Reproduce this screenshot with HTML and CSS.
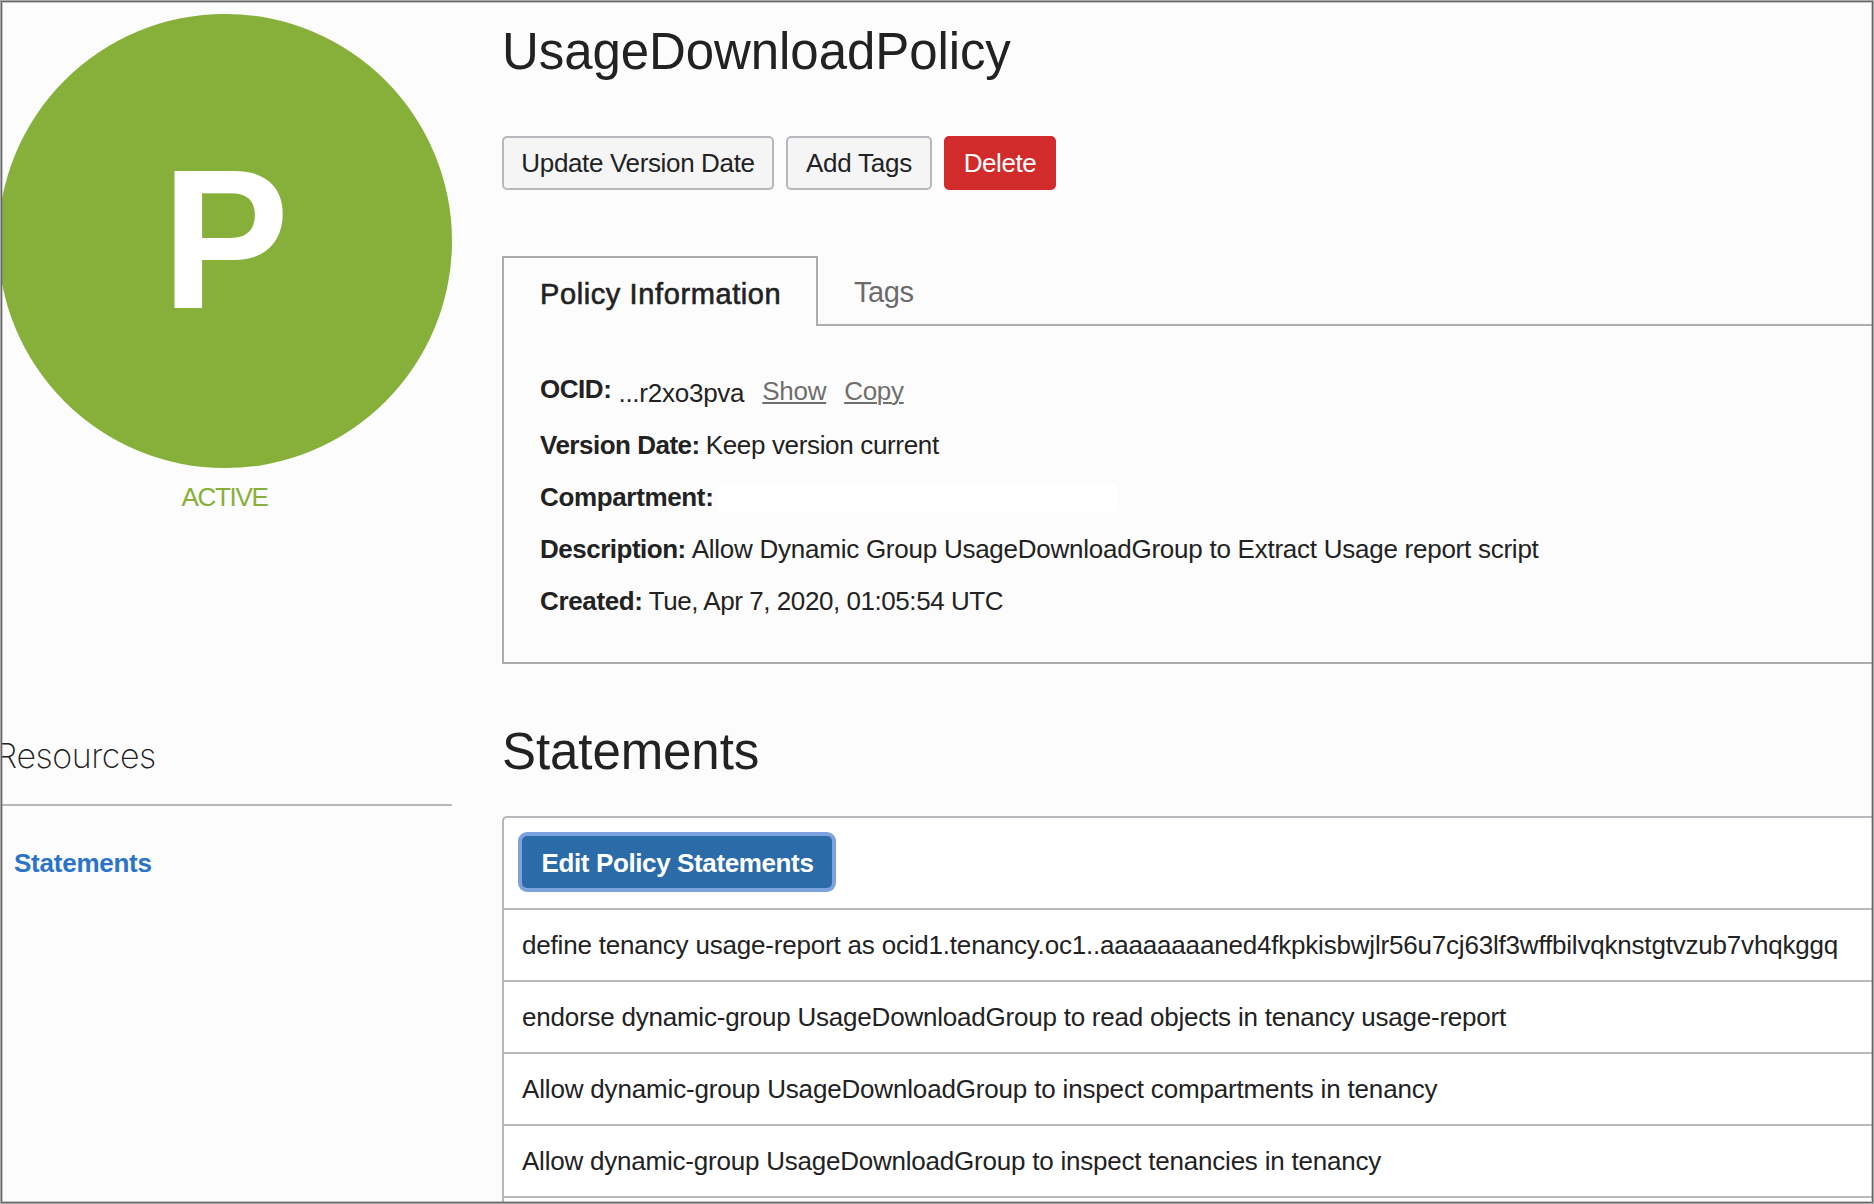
FILE: index.html
```html
<!DOCTYPE html>
<html lang="en">
<head>
<meta charset="utf-8">
<title>UsageDownloadPolicy</title>
<link rel="stylesheet" href="styles.css">
</head>
<body>
<div class="frame">
  <aside class="side">
    <div class="badge"><span class="badge-letter">P</span></div>
    <div class="status">ACTIVE</div>
    <h3 class="side-title">Resources</h3>
    <nav class="side-nav"><a class="side-link">Statements</a></nav>
  </aside>
  <main class="main">
    <h1 class="title">UsageDownloadPolicy</h1>
    <div class="actions">
      <button class="btn btn-update">Update Version Date</button>
      <button class="btn btn-tags">Add Tags</button>
      <button class="btn btn-delete">Delete</button>
    </div>
    <div class="tabs">
      <div class="tab-active">Policy Information</div>
      <div class="tab-idle">Tags</div>
    </div>
    <section class="panel">
      <div class="row"><b class="key key-ocid">OCID:</b><span class="value">...r2xo3pva</span><a class="link">Show</a><a class="link">Copy</a></div>
      <div class="row"><b class="key key-version">Version Date:</b><span class="value value-version">Keep version current</span></div>
      <div class="row"><b class="key key-compartment">Compartment:</b><span class="blank"></span></div>
      <div class="row"><b class="key key-description">Description:</b><span class="value">Allow Dynamic Group UsageDownloadGroup to Extract Usage report script</span></div>
      <div class="row"><b class="key">Created:</b><span class="value value-created">Tue, Apr 7, 2020, 01:05:54 UTC</span></div>
    </section>
    <h2 class="subtitle">Statements</h2>
    <section class="table">
      <div class="table-head"><button class="btn-edit">Edit Policy Statements</button></div>
      <div class="statement">define tenancy usage-report as ocid1.tenancy.oc1..aaaaaaaaned4fkpkisbwjlr56u7cj63lf3wffbilvqknstgtvzub7vhqkggq</div>
      <div class="statement statement-tight">endorse dynamic-group UsageDownloadGroup to read objects in tenancy usage-report</div>
      <div class="statement statement-loose">Allow dynamic-group UsageDownloadGroup to inspect compartments in tenancy</div>
      <div class="statement statement-tight">Allow dynamic-group UsageDownloadGroup to inspect tenancies in tenancy</div>
      <div class="statement"></div>
    </section>
  </main>
</div>
</body>
</html>
```
FILE: styles.css
```css
* { box-sizing: border-box; }
html, body { margin: 0; height: 100%; overflow: hidden; }
body { font: 26px/36px "Liberation Sans", Arial, sans-serif; color: #222; background: #fcfcfc; }
h1, h2, h3 { margin: 0; font-weight: 400; }

.frame { position: relative; display: flex; width: 1874px; height: 1204px; overflow: hidden; }
.frame::after { content: ""; position: absolute; inset: 0; border: 1px solid #a8a8a8; box-shadow: inset 0 0 0 1px #666, inset 0 0 0 2px rgba(120, 120, 120, .4); }

/* Sidebar */
.side { width: 502px; flex: none; padding-top: 14px; }
.badge { width: 454px; height: 454px; margin-left: -2px; border-radius: 50%; background: #86b03a; display: flex; align-items: center; justify-content: center; }
.badge-letter { padding: 0 0 5px 1px; font-size: 199px; line-height: 200px; font-weight: 700; color: #fff; transform: scaleX(.96); }
.status { width: 449px; margin-top: 11px; text-align: center; color: #86b03a; letter-spacing: -1.3px; }
.side-title { margin-top: 216px; width: 452px; height: 75px; text-indent: -4px; border-bottom: 2px solid #b5b9be; font: 150 34px/50px Inter, sans-serif; letter-spacing: -.45px; }
.side-nav { padding: 39px 14px; }
.side-link { color: #2b74c8; font-weight: 700; letter-spacing: -.24px; }

/* Main column */
.main { width: 1372px; flex: none; padding-top: 22px; }
.title, .subtitle { font-size: 51px; line-height: 60px; letter-spacing: -.08px; }
.actions { display: flex; gap: 12px; margin-top: 54px; }
.btn { height: 54px; padding: 0; border: 2px solid #b5b9be; border-radius: 5px; background: #f5f5f5; color: #222; font: inherit; letter-spacing: -.25px; }
.btn-update { width: 272px; letter-spacing: -.35px; }
.btn-tags { width: 146px; }
.btn-delete { width: 112px; border-color: #d22b2b; background: #d22b2b; color: #fff; letter-spacing: -.45px; }

/* Tabs and details */
.tabs { display: flex; margin-top: 66px; height: 70px; font-size: 29px; }
.tab-active { width: 316px; padding: 18px 0 0 36px; border: 2px solid #adadad; border-bottom: 0; letter-spacing: .6px; -webkit-text-stroke: .6px #222; white-space: nowrap; }
.tab-idle { flex: 1; padding: 18px 0 0 36px; border-bottom: 2px solid #adadad; color: #6b6b6b; letter-spacing: -.4px; }
.panel { height: 338px; padding: 41px 0 0 36px; border: solid #adadad; border-width: 0 0 2px 2px; }
.row { display: flex; height: 52px; align-items: center; white-space: nowrap; }
.key { margin-right: 6px; letter-spacing: -.35px; }
.key-ocid { margin-bottom: 8px; margin-right: 7px; letter-spacing: -.45px; }
.key-version { letter-spacing: -.5px; }
.key-compartment { margin-right: 4px; }
.key-description { letter-spacing: -.5px; }
.value { letter-spacing: -.25px; }
.value-version { letter-spacing: -.34px; }
.value-created { letter-spacing: -.44px; }
.link { margin: 0 0 4px 18px; color: #6f6f6f; text-decoration: underline; text-decoration-thickness: 2px; text-underline-offset: 2px; letter-spacing: -.3px; }
.blank { width: 400px; height: 30px; margin-top: 2px; border-radius: 6px; background: #fff; }

/* Statements */
.subtitle { margin-top: 58px; }
.table { margin-top: 34px; border: 2px solid #b5b9be; border-right: 0; border-radius: 5px 0 0 0; background: #fff; }
.table-head { height: 90px; padding: 18px; }
.btn-edit { display: block; width: 310px; height: 52px; padding: 2px 0 0 1px; border: 0; border-radius: 5px; background: #2b6ba8; box-shadow: 0 0 0 4px #7da3de; color: #fff; font: 700 26px/50px "Liberation Sans", Arial, sans-serif; letter-spacing: -.38px; }
.statement { height: 72px; padding: 17px 0 0 18px; border-top: 2px solid #b5b9be; white-space: nowrap; letter-spacing: -.195px; }
.statement-tight { letter-spacing: -.22px; }
.statement-loose { letter-spacing: -.17px; }
```
